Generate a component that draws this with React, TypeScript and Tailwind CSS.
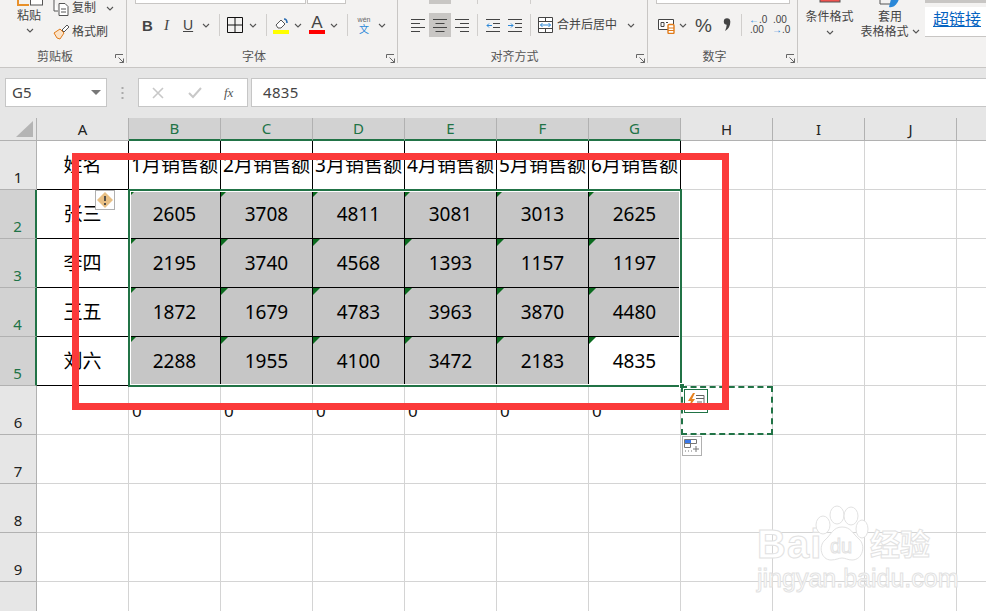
import React from 'react';

const CJK = "font-['Noto_Sans','Noto_Sans_CJK_SC',sans-serif]";

const columns = ['A', 'B', 'C', 'D', 'E', 'F', 'G', 'H', 'I', 'J', 'K'];
const rowsData = [
  ['姓名', '1月销售额', '2月销售额', '3月销售额', '4月销售额', '5月销售额', '6月销售额'],
  ['张三', '2605', '3708', '4811', '3081', '3013', '2625'],
  ['李四', '2195', '3740', '4568', '1393', '1157', '1197'],
  ['王五', '1872', '1679', '4783', '3963', '3870', '4480'],
  ['刘六', '2288', '1955', '4100', '3472', '2183', '4835'],
  ['', '0', '0', '0', '0', '0', '0'],
  [],
  [],
  [],
  [],
];

function Chevron() {
  return (
    <svg width="8" height="5" viewBox="0 0 8 5" className="shrink-0">
      <path d="M1 1l3 3 3-3" fill="none" stroke="#555" strokeWidth="1.1" />
    </svg>
  );
}

function Sep({ className }: { className: string }) {
  return <div className={`w-px h-[22px] bg-[#d0cecc] shrink-0 ${className}`} />;
}

function Launcher() {
  return (
    <svg width="9" height="9" viewBox="0 0 9 9" className="absolute right-[2px] bottom-0">
      <path d="M.5 4V.5H8M8.5 8.5L3.5 3.5M8.5 4.5v4h-4" fill="none" stroke="#666" strokeWidth="1" />
    </svg>
  );
}

function Group({ width, label, children }: { width: string; label: string; children: React.ReactNode }) {
  return (
    <div className={`relative shrink-0 h-[63px] border-r border-[#c8c6c4] flex flex-col ${width}`}>
      <div className="h-[50px] overflow-hidden">{children}</div>
      <div className="h-[13px] pr-[16px] flex items-center justify-center text-[12px] leading-none text-[#555]">{label}</div>
      <Launcher />
    </div>
  );
}

function AlignIcon({ mode }: { mode: 'l' | 'c' | 'r' }) {
  const short = mode === 'l' ? 'M0 4.5h9M0 12.5h9' : mode === 'c' ? 'M2.5 4.5h9M2.5 12.5h9' : 'M5 4.5h9M5 12.5h9';
  return (
    <svg width="14" height="13" viewBox="0 0 14 13">
      <path d="M0 .5h14M0 8.5h14" stroke="#444" strokeWidth="1" />
      <path d={short} stroke="#444" strokeWidth="1" />
    </svg>
  );
}

function IndentIcon({ flip }: { flip?: boolean }) {
  return (
    <svg width="14" height="13" viewBox="0 0 14 13">
      <path d="M0 .5h14M7 4.5h7M7 8.5h7M0 12.5h14" stroke="#444" strokeWidth="1" />
      <path d={flip ? 'M0 6.5h5M3 4.5l2 2-2 2' : 'M1 6.5h5M3 4.5l-2 2 2 2'} fill="none" stroke="#2b88d8" strokeWidth="1" />
    </svg>
  );
}

function Ribbon() {
  return (
    <div className={`h-[68px] shrink-0 flex bg-[#f3f2f1] border-b border-[#c8c6c4] overflow-hidden ${CJK}`}>
      {/* 剪贴板 */}
      <Group width="w-[127px]" label="剪贴板">
        <div className="flex">
          <div className="w-[53px] pl-[17px] flex flex-col">
            <svg width="27" height="6" viewBox="0 0 27 6">
              <path d="M1 0v5h11" fill="none" stroke="#e8902a" strokeWidth="2" />
              <rect x="13.5" y="-6" width="12" height="11" fill="#fff" stroke="#555" />
            </svg>
            <div className="mt-[3px] text-[12px] leading-[14px] text-[#444]">粘贴</div>
            <div className="mt-[5px] ml-[9px]"><Chevron /></div>
          </div>
          <div className="flex flex-col">
            <div className="flex items-center h-[16px]">
              <svg width="16" height="16" viewBox="0 0 16 16">
                <path d="M1 0v11h4M6 3.5h6l3 3v9H6z" fill="#fff" stroke="#555" />
                <path d="M8 9h5M8 12h5" stroke="#555" />
              </svg>
              <span className="ml-[3px] text-[12px] leading-none text-[#444]">复制</span>
              <span className="ml-[10px]"><Chevron /></span>
            </div>
            <div className="flex items-center h-[16px] mt-[8px]">
              <svg width="17" height="16" viewBox="0 0 17 16">
                <path d="M1 9l6-4 4 4-4 6-3-1z" fill="#fbe3c8" stroke="#e07b1a" />
                <path d="M9 6l5-5 2 2-5 5z" fill="#fff" stroke="#555" />
              </svg>
              <span className="ml-[2px] text-[12px] leading-none text-[#444]">格式刷</span>
            </div>
          </div>
        </div>
      </Group>

      {/* 字体 */}
      <Group width="w-[271px]" label="字体">
        <div className="flex h-[4px] pl-[8px] gap-px">
          <div className="w-[171px] bg-white border border-t-0 border-[#c8c6c4]" />
          <div className="w-[39px] bg-white border border-t-0 border-[#c8c6c4]" />
        </div>
        <div className="mt-[9px] h-[24px] flex items-center text-[#444]">
          <span className="ml-[15px] w-[9px] font-bold text-[15px] leading-none font-['Liberation_Sans',sans-serif]">B</span>
          <span className="ml-[13px] w-[8px] italic text-[15px] leading-none font-['Liberation_Serif',serif]">I</span>
          <span className="ml-[11px] w-[10px] underline text-[14px] leading-none font-['Liberation_Sans',sans-serif]">U</span>
          <span className="ml-[9px]"><Chevron /></span>
          <Sep className="ml-[9px]" />
          <svg width="16" height="16" viewBox="0 0 16 16" className="ml-[7px]">
            <path d="M.5.5h15v15H.5zM8 .5v15M.5 8h15" fill="none" stroke="#111" />
          </svg>
          <span className="ml-[6px]"><Chevron /></span>
          <Sep className="ml-[9px]" />
          <svg width="17" height="17" viewBox="0 0 17 17" className="ml-[6px]">
            <path d="M3 8l5-5 4 4-4 4H5z" fill="#fff" stroke="#555" />
            <path d="M11 2c2 0 3 1 3 4" fill="none" stroke="#2b6cb0" strokeWidth="1.6" />
            <rect x="0" y="13" width="16" height="4" fill="#ffff00" />
          </svg>
          <span className="ml-[4px]"><Chevron /></span>
          <div className="ml-[7px] w-[16px] flex flex-col items-center">
            <span className="text-[17px] leading-[14px] font-['Liberation_Sans',sans-serif]">A</span>
            <div className="w-[16px] h-[4px] bg-[#ff0000]" />
          </div>
          <span className="ml-[5px]"><Chevron /></span>
          <Sep className="ml-[9px]" />
          <div className="ml-[8px] w-[16px] flex flex-col items-center">
            <span className="text-[7px] leading-[8px] text-[#666] font-['Liberation_Sans',sans-serif]">wén</span>
            <span className="text-[10px] leading-[11px] text-[#2b88d8]">文</span>
          </div>
          <span className="ml-[6px]"><Chevron /></span>
        </div>
      </Group>

      {/* 对齐方式 */}
      <Group width="w-[250px]" label="对齐方式">
        <div className="flex h-[4px]">
          <div className="ml-[31px] w-[22px] bg-[#c8c6c4]" />
          <div className="ml-[26px] w-px bg-[#d0cecc]" />
          <div className="ml-[52px] w-px bg-[#d0cecc]" />
        </div>
        <div className="mt-[9px] h-[24px] flex items-center">
          <div className="ml-[13px]"><AlignIcon mode="l" /></div>
          <div className="ml-[4px] w-[22px] h-[24px] bg-[#c8c6c4] flex items-center justify-center"><AlignIcon mode="c" /></div>
          <div className="ml-[4px]"><AlignIcon mode="r" /></div>
          <Sep className="ml-[8px]" />
          <div className="ml-[8px]"><IndentIcon /></div>
          <div className="ml-[8px]"><IndentIcon flip /></div>
          <Sep className="ml-[8px]" />
          <svg width="15" height="16" viewBox="0 0 15 16" className="ml-[7px]">
            <path d="M.5.5h14v15H.5zM.5 4.5h14M.5 11.5h14M7.5.5v4M7.5 11.5v4" fill="#fff" stroke="#444" />
            <path d="M2.5 8h10M4.5 6l-2 2 2 2M10.5 6l2 2-2 2" fill="none" stroke="#2b88d8" />
          </svg>
          <span className="ml-[4px] text-[12px] leading-none text-[#444] whitespace-nowrap">合并后居中</span>
          <span className="ml-[10px]"><Chevron /></span>
        </div>
      </Group>

      {/* 数字 */}
      <Group width="w-[150px]" label="数字">
        <div className="h-[4px] ml-[8px] w-[134px] bg-white border border-t-0 border-[#c8c6c4]" />
        <div className="mt-[9px] h-[24px] flex items-center">
          <svg width="17" height="17" viewBox="0 0 17 17" className="ml-[10px]">
            <path d="M.5 2.5h15v10H.5z" fill="#fff" stroke="#444" />
            <path d="M3 5.5h3v4H3zM8 5.5h2" fill="none" stroke="#444" />
            <rect x="10" y="7.5" width="6" height="9" rx="1" fill="#fff" stroke="#e07b1a" strokeWidth="1.4" />
            <path d="M10 11h6M10 13.5h6" stroke="#e07b1a" />
          </svg>
          <span className="ml-[4px]"><Chevron /></span>
          <span className="ml-[8px] text-[19px] leading-none text-[#444] font-['Liberation_Sans',sans-serif]">%</span>
          <svg width="8" height="14" viewBox="0 0 8 14" className="ml-[11px]">
            <circle cx="4" cy="3.5" r="3.2" fill="#444" />
            <path d="M7.2 3.5C7.5 8 5 11.5 2 13c1.2-2.5 1.8-5 1.6-8z" fill="#444" />
          </svg>
          <Sep className="ml-[10px]" />
          <div className="ml-[7px] w-[16px] flex flex-col text-[10px] leading-[10px] text-[#444] font-['Liberation_Sans',sans-serif]">
            <span className="whitespace-nowrap"><span className="text-[#2b88d8]">←</span>.0</span>
            <span className="pl-[1px]">.00</span>
          </div>
          <div className="ml-[7px] w-[16px] flex flex-col text-[10px] leading-[10px] text-[#444] font-['Liberation_Sans',sans-serif]">
            <span className="pl-[1px]">.00</span>
            <span className="whitespace-nowrap"><span className="text-[#2b88d8]">→</span>.0</span>
          </div>
        </div>
      </Group>

      {/* 样式 */}
      <div className="shrink-0 w-[127px] h-[63px] flex text-[12px] leading-[15px] text-[#444]">
        <div className="w-[62px] pl-[1px] flex flex-col items-center">
          <svg width="22" height="4" viewBox="0 0 22 4" className="mb-[5px]">
            <rect x="1" y="-3" width="20" height="5" fill="#ef5350" stroke="#555" />
          </svg>
          <span>条件格式</span>
          <span className="mt-[6px]"><Chevron /></span>
        </div>
        <div className="w-[60px] flex flex-col items-center">
          <svg width="22" height="9" viewBox="0 0 22 9">
            <path d="M1-2v6h12" fill="none" stroke="#555" />
            <path d="M10 7c4 1 8-2 10-8h-8z" fill="#2b88d8" />
          </svg>
          <span>套用</span>
          <span className="flex items-center whitespace-nowrap">表格格式<span className="ml-[3px]"><Chevron /></span></span>
        </div>
      </div>

      {/* 单元格样式 */}
      <div className="flex-1 h-[37px] flex flex-col border-b border-[#c8c6c4]">
        <div className="h-[3px] bg-[#c8c6c4]" />
        <div className="h-[4px]" />
        <div className="flex-1 bg-white pl-[8px] pb-[6px] flex items-center text-[16px] leading-none text-[#0563c1] underline whitespace-nowrap">超链接</div>
      </div>
    </div>
  );
}

function FormulaBar() {
  return (
    <div className="h-[50px] shrink-0 bg-[#e6e6e6] pt-[10px] flex items-start">
      <div className="ml-[5px] w-[102px] h-[29px] bg-white border border-[#c6c6c6] flex items-center justify-between pl-[6px] pr-[5px] text-[15px] text-[#444] font-['Noto_Sans',sans-serif]">
        G5
        <svg width="10" height="5" viewBox="0 0 10 5"><path d="M0 0h10L5 5z" fill="#777" /></svg>
      </div>
      <svg width="3" height="14" viewBox="0 0 3 14" className="ml-[14px] mt-[8px]">
        <path d="M1.5 1v2M1.5 6v2M1.5 11v2" stroke="#aaa" strokeWidth="2" />
      </svg>
      <div className="ml-[14px] w-[110px] h-[29px] bg-white border border-[#c6c6c6] flex items-center">
        <svg width="12" height="12" viewBox="0 0 12 12" className="ml-[13px]">
          <path d="M1 1l10 10M11 1L1 11" stroke="#c8c8c8" strokeWidth="1.6" />
        </svg>
        <svg width="14" height="12" viewBox="0 0 14 12" className="ml-[24px]">
          <path d="M1 6l4 4 8-9" fill="none" stroke="#c8c8c8" strokeWidth="2" />
        </svg>
        <span className="ml-[22px] italic text-[13px] leading-none text-[#555] font-['Liberation_Serif',serif]">fx</span>
      </div>
      <div className="ml-[3px] flex-1 h-[29px] bg-white border border-r-0 border-[#c6c6c6] flex items-center pl-[11px] text-[15px] tracking-[0.3px] text-[#444] font-['Noto_Sans',sans-serif]">
        4835
      </div>
    </div>
  );
}

function ColHeader({ name }: { name: string }) {
  const selected = ['B', 'C', 'D', 'E', 'F', 'G'].includes(name);
  return (
    <div
      className={
        selected
          ? 'flex items-center justify-center bg-[#d2d2d2] border-r border-[#b1b1b1] border-b-2 border-b-[#217346] text-[#217346] text-[15px]'
          : 'flex items-center justify-center bg-[#e6e6e6] border-r border-b border-[#b1b1b1] text-[#222] text-[15px]'
      }
    >
      {name}
    </div>
  );
}

function RowHeader({ n }: { n: number }) {
  const selected = n >= 2 && n <= 5;
  return (
    <div
      className={
        selected
          ? 'flex items-end justify-center pb-[2px] bg-[#d2d2d2] border-b border-[#b1b1b1] border-r-2 border-r-[#217346] text-[#217346] text-[15px] leading-[20px]'
          : 'flex items-end justify-center pb-[2px] bg-[#e6e6e6] border-b border-r border-[#b1b1b1] text-[#222] text-[15px] leading-[20px]'
      }
    >
      {n}
    </div>
  );
}

function Cell({ r, c, value }: { r: number; c: number; value: string }) {
  const inTable = r < 5 && c < 7;
  const isNum = r >= 1 && r <= 4 && c >= 1 && c <= 6;
  const isGray = isNum && !(r === 4 && c === 6);
  const isZero = r === 5;
  return (
    <div
      className={[
        'relative whitespace-nowrap overflow-visible flex justify-center',
        inTable ? 'border-r border-b border-black text-black' : 'border-r border-b border-[#d4d4d4]',
        isGray ? 'bg-[#c6c6c6]' : 'bg-white',
        isZero ? 'items-start justify-start! pl-[3px] pt-[14px] text-[17px] leading-[22px]' : 'items-center text-[19px]',
      ].join(' ')}
    >
      {value}
      {isNum && (
        <svg width="7" height="7" viewBox="0 0 7 7" className="absolute left-0 top-0">
          <path d="M0 0h7L0 7z" fill="#0b6b1f" />
        </svg>
      )}
    </div>
  );
}

function Watermark() {
  const outline = '[-webkit-text-stroke:1px_#e2e2e2] text-white';
  return (
    <div className="absolute left-[757px] top-[505px] w-[176px] flex flex-col font-['Liberation_Sans','Noto_Sans_CJK_SC',sans-serif]">
      <div className="flex items-end h-[58px]">
        <span className={`text-[40px] leading-[38px] font-bold tracking-[1px] w-[58px] ${outline}`}>Bai</span>
        <div className="relative w-[55px] h-[58px]">
          <svg width="55" height="58" viewBox="0 0 55 58" className="absolute inset-0">
            <g fill="#fff" stroke="#e2e2e2">
              <ellipse cx="8" cy="20" rx="7" ry="9" />
              <ellipse cx="22" cy="10" rx="7" ry="9" />
              <ellipse cx="36" cy="11" rx="7" ry="9" />
              <ellipse cx="47" cy="24" rx="6" ry="9" />
              <path d="M27 22c9 0 11 7 17 12 7 6 4 21-7 21-4 0-7-2-10-2s-6 2-11 2C6 55 3 41 10 35c6-5 8-13 17-13z" />
            </g>
          </svg>
          <span className={`absolute left-[15px] top-[31px] text-[20px] leading-[20px] ${outline}`}>du</span>
        </div>
        <span className={`text-[30px] leading-[36px] font-bold whitespace-nowrap ${outline}`}>经验</span>
      </div>
      <span className={`mt-[2px] text-[25px] leading-[26px] whitespace-nowrap ${outline}`}>jingyan.baidu.com</span>
    </div>
  );
}

export default function App() {
  return (
    <div className="relative w-[986px] h-[611px] overflow-hidden bg-white flex flex-col font-['Noto_Sans','Noto_Sans_CJK_SC',sans-serif]">
      <Ribbon />
      <FormulaBar />

      {/* 工作表 */}
      <div className="relative flex-1 overflow-hidden">
        <div className="grid grid-cols-[37px_repeat(11,92px)] grid-rows-[23px_repeat(10,49px)] text-[#111]">
          <div className="bg-[#e6e6e6] border-r border-b border-[#b1b1b1] flex items-end justify-end pr-[3px] pb-[3px]">
            <svg width="17" height="16" viewBox="0 0 17 16"><path d="M17 0v16H0z" fill="#b4b4b4" /></svg>
          </div>
          {columns.map((name) => (
            <ColHeader key={name} name={name} />
          ))}
          {rowsData.map((row, r) => (
            <React.Fragment key={r}>
              <RowHeader n={r + 1} />
              {columns.map((name, c) => (
                <Cell key={name} r={r} c={c} value={row[c] ?? ''} />
              ))}
            </React.Fragment>
          ))}
        </div>

        {/* 选区 */}
        <div className="absolute left-[128px] top-[71px] w-[554px] h-[198px] border-2 border-[#217346] shadow-[inset_0_0_0_1px_#fff]" />
        <div className="absolute left-[679px] top-[265px] w-[6px] h-[6px] bg-[#217346] border border-white" />

        {/* 复制虚线框 */}
        <div className="absolute left-[681px] top-[268px] w-[92px] h-[49px] border-2 border-dashed border-[#217346]" />

        {/* 错误提示 */}
        <div className="absolute left-[95px] top-[72px] w-[20px] h-[20px] bg-white border border-[#b0b0b0] flex items-center justify-center">
          <svg width="16" height="16" viewBox="0 0 16 16">
            <path d="M8 0l8 8-8 8-8-8z" fill="#e8bf84" />
            <path d="M8 4v5M8 11v2" stroke="#444" strokeWidth="1.8" />
          </svg>
        </div>

        {/* 闪电填充按钮 */}
        <div className="absolute left-[684px] top-[271px] w-[24px] h-[24px] bg-white border border-[#217346] flex items-center justify-center">
          <svg width="18" height="16" viewBox="0 0 18 16">
            <path d="M6 0L1 8h3l-2 6 6-8H5l3-6z" fill="#e8821e" />
            <path d="M9 2.5h8v12H7M9 5.5h8M10 9h5" fill="none" stroke="#666" />
          </svg>
        </div>

        {/* 快速分析按钮 */}
        <div className="absolute left-[682px] top-[318px] w-[20px] h-[20px] bg-white border border-[#b0b0b0] flex items-center justify-center">
          <svg width="16" height="14" viewBox="0 0 16 14">
            <rect x="1" y="1" width="6" height="4" fill="#3b78e7" />
            <path d="M.5.5h12v4H.5zM.5 4.5h6v4h-6z" fill="none" stroke="#777" />
            <path d="M1 12h1M4 12h1M7 12h1M12 7v6M9 10h6" stroke="#777" />
          </svg>
        </div>
      </div>

      <Watermark />

      {/* 红色标注框 */}
      <div className="absolute left-[72px] top-[153px] w-[657px] h-[257px] border-[7px] border-[#fb3a3a]" />
    </div>
  );
}
